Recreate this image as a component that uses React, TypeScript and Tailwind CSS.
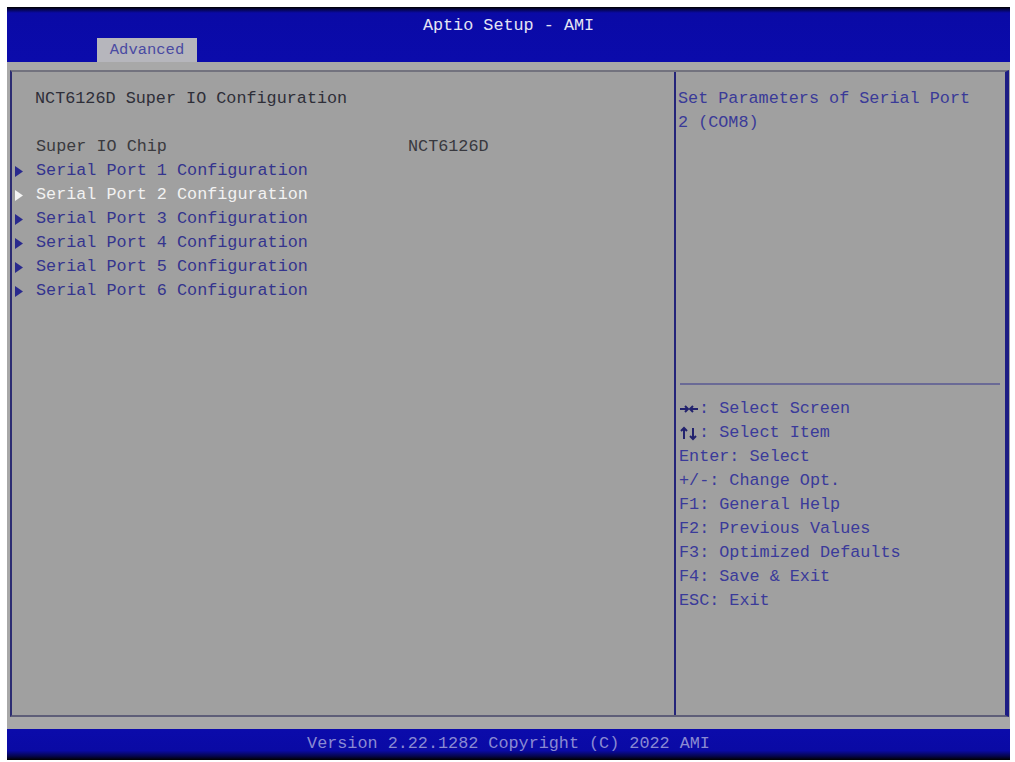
import React from "react";

const mono = { fontFamily: '"Liberation Mono", "DejaVu Sans Mono", monospace' };

function Tri({ white }: { white?: boolean }) {
  return (
    <svg width="8" height="11" viewBox="0 0 8 11" className="block">
      <polygon points="0,0 8,5.5 0,11" fill={white ? "#f4f4f4" : "#2a2a8e"} />
    </svg>
  );
}

function LR() {
  return (
    <svg width="20" height="24" viewBox="0 0 20 24" className="inline-block align-top">
      <g stroke="#22226e" strokeWidth="2" fill="none">
        <line x1="1" y1="12" x2="9" y2="12" />
        <polyline points="6,9 9,12 6,15" />
        <line x1="11" y1="12" x2="19" y2="12" />
        <polyline points="14,9 11,12 14,15" />
      </g>
    </svg>
  );
}

function UD() {
  return (
    <svg width="20" height="24" viewBox="0 0 20 24" className="inline-block align-top">
      <g stroke="#22226e" strokeWidth="2" fill="none">
        <line x1="5" y1="7" x2="5" y2="18" />
        <polyline points="2,10 5,7 8,10" />
        <line x1="14" y1="7" x2="14" y2="18" />
        <polyline points="11,15 14,18 17,15" />
      </g>
    </svg>
  );
}

const ports = [1, 2, 3, 4, 5, 6];

const keys: [string, string][] = [
  ["LR", ": Select Screen"],
  ["UD", ": Select Item"],
  ["Enter", ": Select"],
  ["+/-", ": Change Opt."],
  ["F1", ": General Help"],
  ["F2", ": Previous Values"],
  ["F3", ": Optimized Defaults"],
  ["F4", ": Save & Exit"],
  ["ESC", ": Exit"],
];

export default function App() {
  return (
    <div
      className="w-[1015px] h-[762px] bg-white pl-[7px] pt-[7px] pr-[5px] pb-[2px] text-[16.8px] leading-[24px]"
      style={mono}
    >
      <div className="flex flex-col h-full">
        {/* Header */}
        <div className="h-[55px] flex flex-col bg-[linear-gradient(to_bottom,#000000_0px,#06065a_3px,#0a0aa6_6px,#0b0bab_100%)]">
          <div className="h-[31px] pt-[7px] text-center text-[#e4e4f4]">Aptio Setup - AMI</div>
          <div className="h-[24px] pl-[90px] flex">
            <div className="w-[100px] h-[24px] bg-[#b6b6bc] text-[#4a4aa2] text-center text-[15.5px] leading-[25px]">
              Advanced
            </div>
          </div>
        </div>

        {/* Main */}
        <div className="flex-1 bg-[#a8a8a8] pt-[8px] pl-[3px] pr-[1px] pb-[12px] flex flex-col">
          <div className="flex-1 flex bg-[#a0a0a0] border-t-[2px] border-t-[#72727e] border-l-[2px] border-l-[#2c2c72] border-r-[4px] border-r-[#1c1c84] border-b-[2px] border-b-[#5e5e78]">
            {/* Left panel */}
            <div className="w-[664px] border-r-[2px] border-r-[#24247a] pl-[3px] pt-[15px]">
              <div className="pl-[20px] text-[#2e2e38]">NCT6126D Super IO Configuration</div>
              <div className="mt-[24px] flex">
                <div className="w-[21px]" />
                <div className="w-[372px] text-[#3a3a3e]">Super IO Chip</div>
                <div className="text-[#38383e]">NCT6126D</div>
              </div>
              {ports.map((p) => (
                <div key={p} className="flex items-center h-[24px]">
                  <div className="w-[21px] flex items-center">
                    <Tri white={p === 2} />
                  </div>
                  <div className={p === 2 ? "text-[#f2f2f2]" : "text-[#34348e]"}>
                    {`Serial Port ${p} Configuration`}
                  </div>
                </div>
              ))}
            </div>

            {/* Right panel */}
            <div className="flex-1 flex flex-col">
              <div className="h-[311px] pl-[2px] pt-[15px] text-[#3a3a98]">
                <div>Set Parameters of Serial Port</div>
                <div>2 (COM8)</div>
              </div>
              <div className="h-[2px] ml-[4px] mr-[5px] bg-[#6a6a96]" />
              <div className="pl-[3px] pt-[12px]">
                {keys.map(([k, v]) => (
                  <div key={k} className="h-[24px] text-[#3a3a9a] whitespace-pre">
                    {k === "LR" ? <LR /> : k === "UD" ? <UD /> : <span>{k}</span>}
                    {v}
                  </div>
                ))}
              </div>
            </div>
          </div>
        </div>

        {/* Footer */}
        <div className="h-[31px] pt-[3px] text-center text-[#8a8ad2] bg-[linear-gradient(to_bottom,#0b0bab_0%,#0a0aa4_70%,#05054a_88%,#000000_100%)]">
          Version 2.22.1282 Copyright (C) 2022 AMI
        </div>
      </div>
    </div>
  );
}
